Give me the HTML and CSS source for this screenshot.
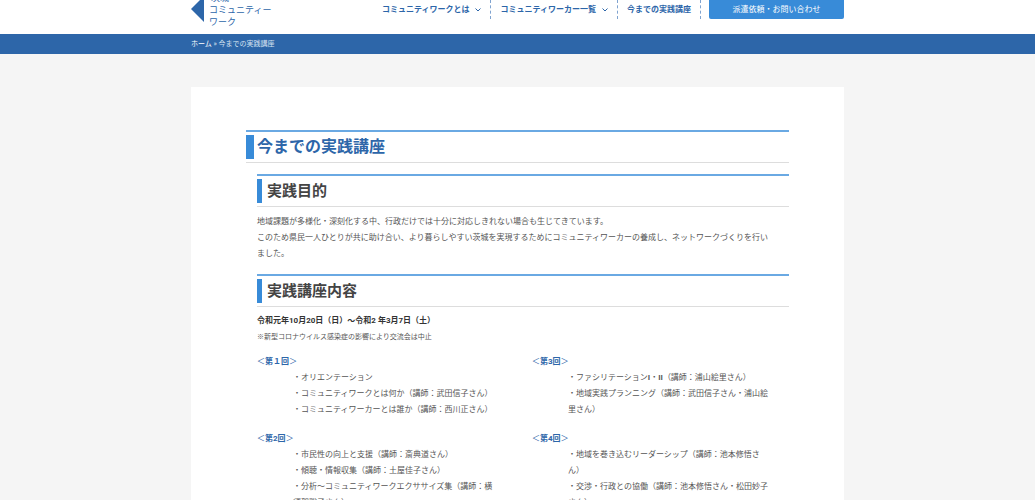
FILE: index.html
```html
<!DOCTYPE html>
<html lang="ja">
<head>
<meta charset="utf-8">
<meta name="viewport" content="width=device-width, initial-scale=1">
<title>今までの実践講座</title>
<link rel="stylesheet" href="styles.css">
</head>
<body>
<header class="header">
  <div class="container header-inner">
    <a class="logo" href="#">
      <svg class="logo-mark" viewBox="0 0 13 26" aria-hidden="true"><path d="M0 13 13 0V26Z"/></svg>
      <span class="logo-text"><span class="logo-area">茨城</span><span>コミュニティー</span><span>ワーク</span></span>
    </a>
    <nav class="nav">
      <a class="nav-link" href="#">コミュニティワークとは<svg class="chevron" viewBox="0 0 6 4" aria-hidden="true"><path d="M.5.5 3 3 5.500.5"/></svg></a>
      <a class="nav-link" href="#">コミュニティワーカー一覧<svg class="chevron" viewBox="0 0 6 4" aria-hidden="true"><path d="M.5.5 3 3 5.500.5"/></svg></a>
      <a class="nav-link" href="#">今までの実践講座</a>
      <a class="contact" href="#">派遣依頼・お問い合わせ</a>
    </nav>
  </div>
</header>
<div class="breadcrumb">
  <div class="container"><a href="#">ホーム</a> » <span>今までの実践講座</span></div>
</div>
<main class="container card">
  <h1 class="title">今までの実践講座</h1>
  <div class="content">
    <h2 class="heading">実践目的</h2>
    <p class="text">地域課題が多様化・深刻化する中、行政だけでは十分に対応しきれない場合も生じてきています。<br>このため県民一人ひとりが共に助け合い、より暮らしやすい茨城を実現するためにコミュニティワーカーの養成し、ネットワークづくりを行いました。</p>
    <h2 class="heading">実践講座内容</h2>
    <p class="date">令和元年10月20日（日）～令和2 年3月7日（土）</p>
    <p class="note">※新型コロナウイルス感染症の影響により交流会は中止</p>
    <div class="sessions">
      <section>
        <h3 class="session-title">＜<b>第１回</b>＞</h3>
        <p class="session-list">・オリエンテーション<br>・コミュニティワークとは何か（講師：武田信子さん）<br>・コミュニティワーカーとは誰か（講師：西川正さん）</p>
        <h3 class="session-title">＜<b>第2回</b>＞</h3>
        <p class="session-list">・市民性の向上と支援（講師：斎典道さん）<br>・傾聴・情報収集（講師：土屋佳子さん）<br>・分析～コミュニティワークエクササイズ集（講師：横須賀聡子さん）</p>
      </section>
      <section>
        <h3 class="session-title">＜<b>第3回</b>＞</h3>
        <p class="session-list">・ファシリテーション<b>I</b>・<b>II</b>（講師：浦山絵里さん）<br>・地域実践プランニング（講師：武田信子さん・浦山絵里さん）</p>
        <h3 class="session-title">＜<b>第4回</b>＞</h3>
        <p class="session-list">・地域を巻き込むリーダーシップ（講師：池本修悟さん）<br>・交渉・行政との協働（講師：池本修悟さん・松田妙子さん）</p>
      </section>
    </div>
  </div>
</main>
</body>
</html>
```
FILE: styles.css
```css
* {
  box-sizing: border-box;
}

body {
  height: 100vh;
  margin: 0;
  overflow: hidden;
  background: #f5f5f5;
  color: #555;
  font: 8px/16px Roboto, "Noto Sans CJK JP", sans-serif;
}

h1, h2, h3, p {
  margin: 0;
}

a {
  color: inherit;
  text-decoration: none;
}

.container {
  width: calc(100% - 32px);
  max-width: 653px;
  margin: 0 auto;
}

.header {
  height: 34px;
  overflow: hidden;
  background: #fff;
  color: #2d66a9;
}

.header-inner {
  display: flex;
  justify-content: space-between;
  align-items: flex-end;
  height: 28px;
}

.logo {
  display: flex;
  align-items: flex-end;
  gap: 5px;
}

.logo-mark {
  width: 13px;
  height: 26px;
  margin-bottom: 6px;
  fill: #2d66a9;
}

.logo-text {
  display: flex;
  flex-direction: column;
  font-size: 9px;
  line-height: 12px;
}

.logo-area {
  padding-left: 2px;
}

.nav {
  display: flex;
  height: 28px;
  padding-bottom: 9px;
}

.nav-link {
  display: flex;
  align-items: center;
  gap: 6px;
  padding: 0 9px;
  border-right: 1px dashed #7fa3d0;
  font-weight: 700;
}

.chevron {
  width: 6px;
  height: 4px;
  fill: none;
  stroke: #2d66a9;
}

.contact {
  width: 135px;
  margin-left: 8px;
  border-radius: 0 0 2px 2px;
  background: #388bd8;
  color: #fff;
  line-height: 19px;
  text-align: center;
}

.breadcrumb {
  padding: 2px 0;
  background: #2d66a9;
  color: #d5e2f1;
  font-size: 7px;
}

.breadcrumb a {
  color: #fff;
}

.card {
  margin-top: 33px;
  padding: 43px 55px;
  background: #fff;
}

.title,
.heading {
  display: flex;
  align-items: center;
  padding: 3px 0;
  border-top: 2px solid #6aa9e3;
  border-bottom: 1px solid #ddd;
  line-height: 24px;
}

.title::before,
.heading::before {
  content: "";
  height: 24px;
  background: #388bd8;
}

.title {
  color: #2d66a9;
  font-size: 16px;
}

.title::before {
  width: 8px;
  margin-right: 3px;
}

.content {
  padding: 11px 0 0 11px;
}

.heading {
  color: #444;
  font-size: 15px;
}

.heading::before {
  width: 5px;
  margin-right: 5px;
}

.text {
  padding: 7px 16px 12px 0;
}

.date {
  padding-top: 6px;
  color: #333;
  font-weight: 700;
}

.note {
  font-size: 7px;
}

.sessions {
  display: grid;
  grid-template-columns: 1fr 1fr;
  gap: 18px;
  padding-top: 8px;
}

.session-title {
  color: #2d66a9;
  font-size: 8px;
  line-height: 17px;
  font-weight: 400;
}

.session-list {
  min-height: 48px;
  margin-bottom: 12px;
  padding: 0 14px 0 36px;
}
```
